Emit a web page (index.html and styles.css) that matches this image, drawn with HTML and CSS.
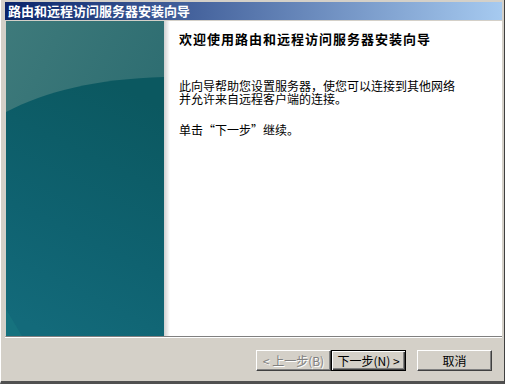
FILE: index.html
```html
<!DOCTYPE html>
<html>
<head>
    <title>路由和远程访问服务器安装向导</title>
    <link rel="stylesheet" href="styles.css">
</head>
<body>
    <div class="window">
        <div class="titlebar">路由和远程访问服务器安装向导</div>
        <div class="main">
            <div class="side">
                <svg width="158" height="315" viewBox="0 0 158 315">
                    <defs>
                        <linearGradient id="top" x1="0" y1="0" x2="1" y2="1">
                            <stop offset="0" stop-color="#3e7a7b"/>
                            <stop offset="1" stop-color="#23656b"/>
                        </linearGradient>
                        <linearGradient id="low" x1="0.6" y1="0" x2="0.3" y2="1">
                            <stop offset="0" stop-color="#0b5860"/>
                            <stop offset="0.6" stop-color="#0f6270"/>
                            <stop offset="1" stop-color="#136a7a"/>
                        </linearGradient>
                    </defs>
                    <rect width="158" height="315" fill="url(#top)"/>
                    <path d="M0 91 C40 70 90 58 158 56 L158 315 L0 315 Z" fill="url(#low)"/>
                    <path d="M0 288 L16 315 L0 315 Z" fill="#1a7a82" opacity="0.5"/>
                </svg>
            </div>
            <div class="shade"></div>
            <div class="content">
                <h1>欢迎使用路由和远程访问服务器安装向导</h1>
                <p>此向导帮助您设置服务器，使您可以连接到其他网络<br>并允许来自远程客户端的连接。</p>
                <p class="next-hint">单击“下一步”继续。</p>
            </div>
        </div>
        <div class="buttons">
            <button type="button" class="disabled">&lt; 上一步(B)</button>
            <button type="button" class="default">下一步(N) &gt;</button>
            <button type="button" class="cancel">取消</button>
        </div>
    </div>
</body>
</html>
```

FILE: styles.css
```css
body {
    margin: 0;
    background: #d4d0c8;
    font-family: "Noto Sans CJK SC", "DejaVu Sans", sans-serif;
    font-size: 12px;
}
.window {
    width: 505px;
    height: 384px;
    box-sizing: border-box;
    display: flex;
    flex-direction: column;
    padding: 2px 2px 0 4px;
    background: #d4d0c8;
    border-left: 1px solid #ffffff;
    border-right: 1px solid #404040;
    border-bottom: 3px solid #505050;
}
.titlebar {
    height: 18px;
    line-height: 18px;
    padding-left: 3px;
    color: #fff;
    font-weight: bold;
    font-size: 13px;
    background: linear-gradient(to right, #0a246a, #a6caf0);
}
.main {
    display: flex;
    height: 315px;
    margin-top: 1px;
    border-left: 1px solid #d4d0c8;
    border-bottom: 1px solid #808080;
    box-shadow: 0 1px 0 #fff;
}
.side svg {
    display: block;
}
.shade {
    width: 6px;
    background: linear-gradient(to right, #cfcfcf, #ffffff);
}
.content {
    flex: 1;
    background: #fff;
    padding: 11px 0 0 9px;
    color: #000;
}
.content h1 {
    margin: 0;
    font-size: 13px;
    line-height: 14px;
    letter-spacing: 1px;
    font-weight: bold;
}
.content p {
    margin: 33px 0 0;
    line-height: 13px;
}
.content .next-hint {
    margin-top: 18px;
}
.buttons {
    flex: 1;
    display: flex;
    align-items: flex-start;
    justify-content: flex-end;
    padding: 13px 10px 0 0;
}
button {
    width: 75px;
    height: 21px;
    padding: 0;
    font-family: "Noto Sans CJK SC", "DejaVu Sans", sans-serif;
    font-size: 12px;
    line-height: 17px;
    color: #000;
    background: #d4d0c8;
    border: 1px solid;
    border-color: #fff #404040 #404040 #fff;
    box-shadow: inset -1px -1px #808080;
}
button.disabled {
    color: #808080;
    text-shadow: 1px 1px #fff;
}
button.default {
    border: 1px solid #000;
    box-shadow: inset 1px 1px #fff, inset -1px -1px #404040, inset -2px -2px #808080;
}
button.cancel {
    margin-left: 11px;
}
```
